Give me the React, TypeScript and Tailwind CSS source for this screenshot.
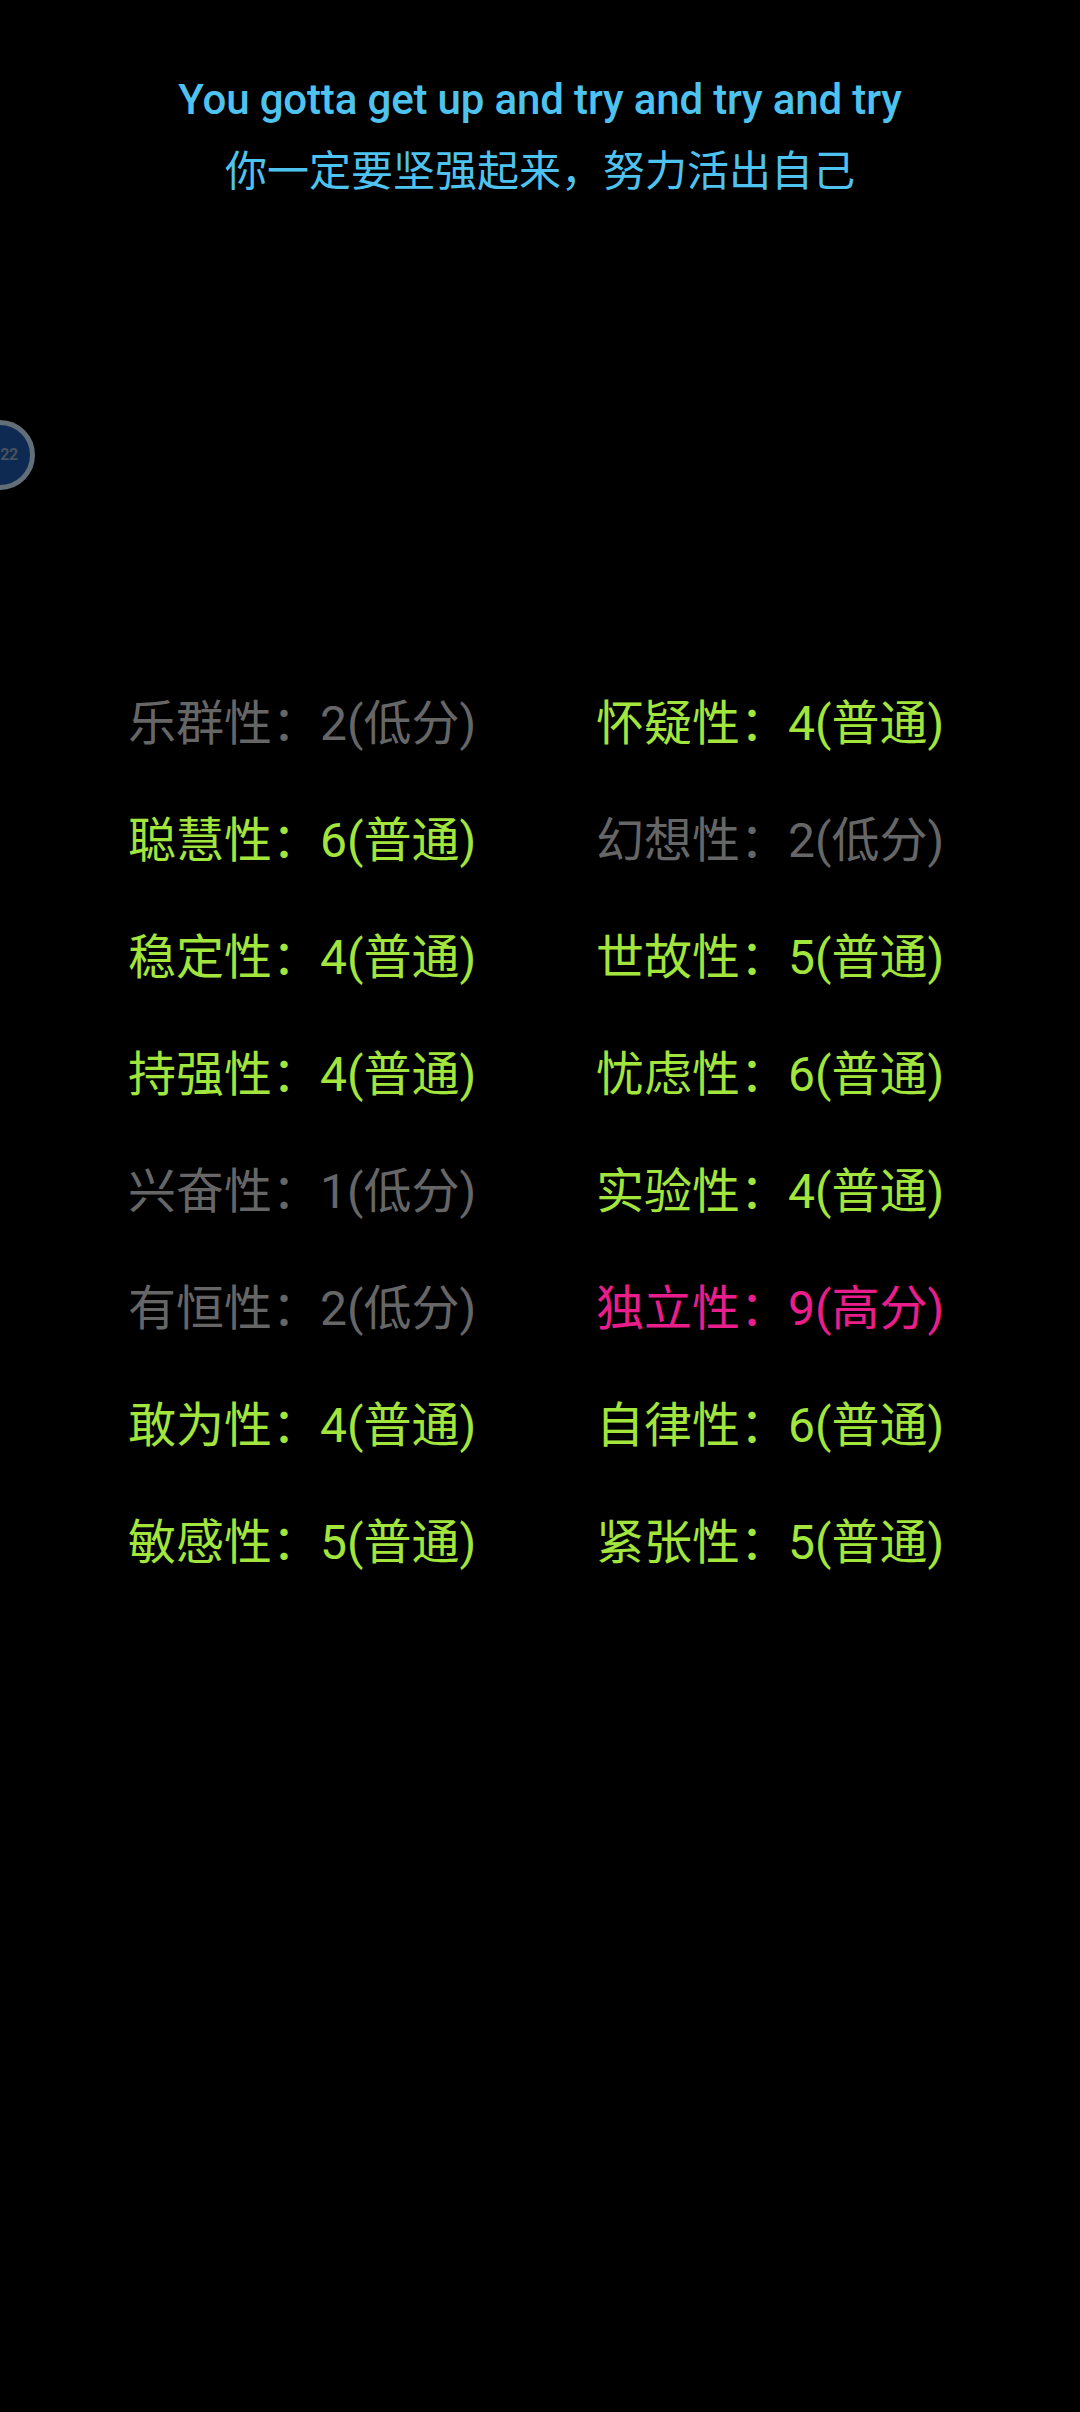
const FONT = "[font-family:Roboto,'Noto_Sans_CJK_SC',sans-serif]";

type Level = "low" | "mid" | "high";

const rows: [string, number, string, Level][] = [
  ["乐群性", 2, "低分", "low"],
  ["怀疑性", 4, "普通", "mid"],
  ["聪慧性", 6, "普通", "mid"],
  ["幻想性", 2, "低分", "low"],
  ["稳定性", 4, "普通", "mid"],
  ["世故性", 5, "普通", "mid"],
  ["持强性", 4, "普通", "mid"],
  ["忧虑性", 6, "普通", "mid"],
  ["兴奋性", 1, "低分", "low"],
  ["实验性", 4, "普通", "mid"],
  ["有恒性", 2, "低分", "low"],
  ["独立性", 9, "高分", "high"],
  ["敢为性", 4, "普通", "mid"],
  ["自律性", 6, "普通", "mid"],
  ["敏感性", 5, "普通", "mid"],
  ["紧张性", 5, "普通", "mid"],
];

const levelClass: Record<Level, string> = {
  low: "text-[#666666]",
  mid: "text-[#a2e53c]",
  high: "text-[#e91e8c]",
};

export default function App() {
  return (
    <div className={`relative h-[2412px] w-[1080px] overflow-hidden bg-black ${FONT}`}>
      <div className="pt-[64px] text-center text-[42px] leading-[72px] text-[#4fc3f0]">
        <p className="font-medium tracking-[-0.15px]">You gotta get up and try and try and try</p>
        <p>你一定要坚强起来，努力活出自己</p>
      </div>

      <div className="absolute left-[-35px] top-[420px] flex h-[70px] w-[70px] items-center justify-center rounded-full border-[5px] border-[#626e78] bg-[#0e2a52]">
        <span className="pl-[18px] text-[16px] leading-none font-bold tracking-[-0.5px] text-[#46525e]">22</span>
      </div>

      <div className="mt-[457px] grid grid-cols-[468px_auto] pl-[128px]">
        {rows.map(([name, score, label, level]) => (
          <div
            key={name}
            className={`flex h-[117px] items-center whitespace-nowrap text-[48px] leading-none ${levelClass[level]}`}
          >
            {name}：{score}({label})
          </div>
        ))}
      </div>
    </div>
  );
}
